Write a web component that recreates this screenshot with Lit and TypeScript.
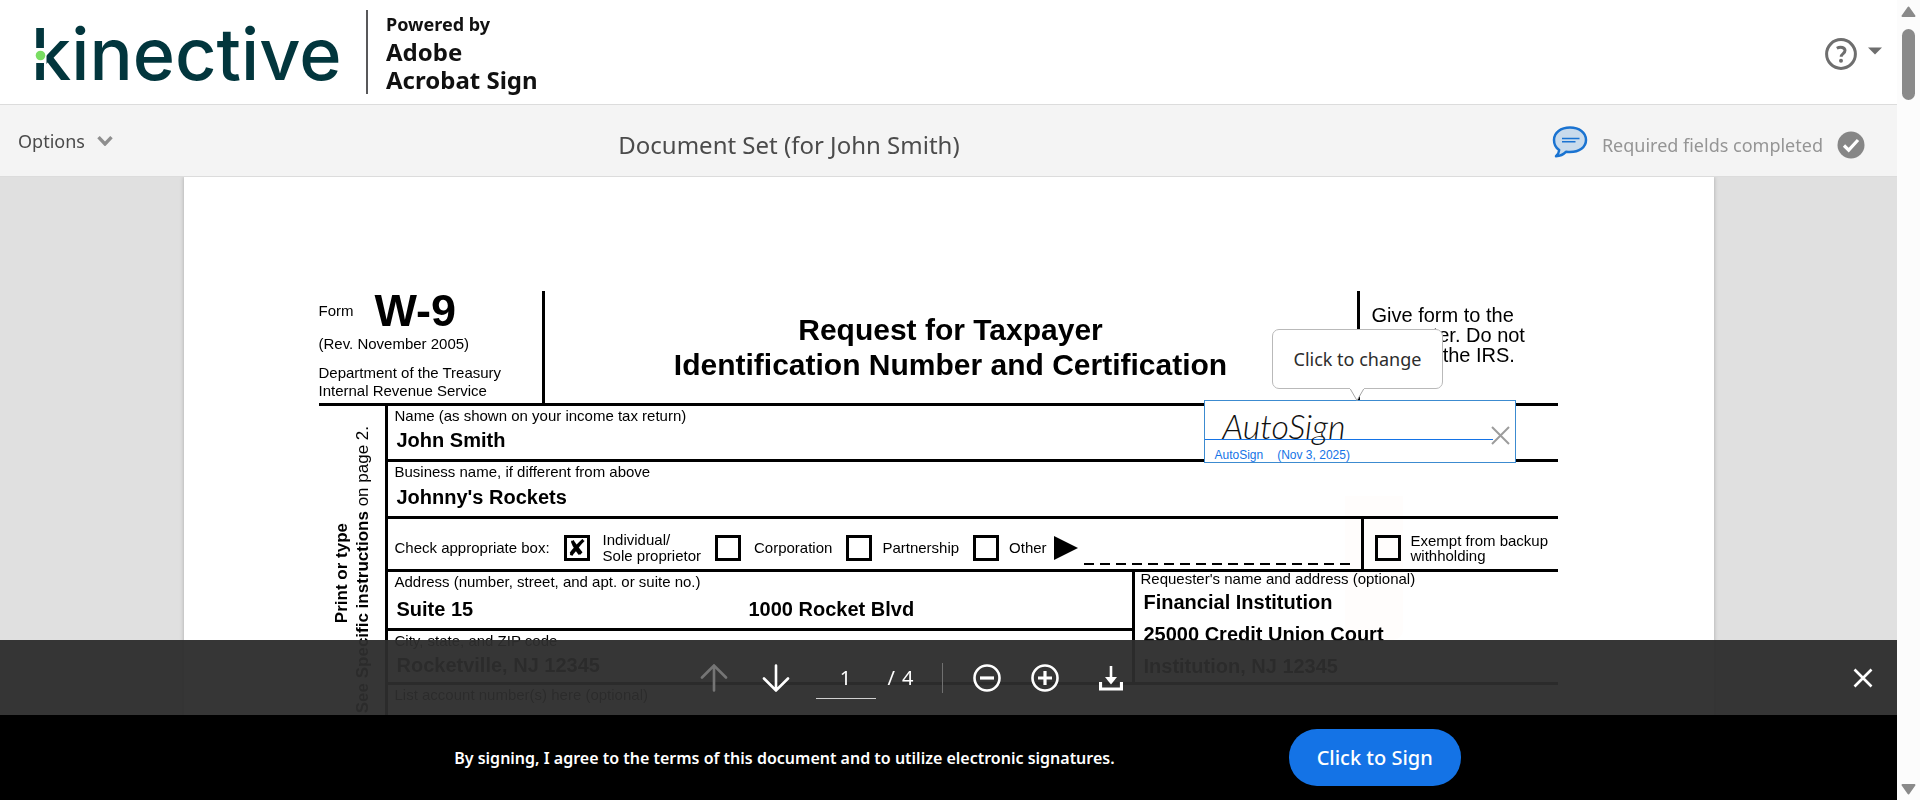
import { LitElement, html, css, svg } from "lit";
import { customElement, state } from "lit/decorators.js";

@customElement("brand-header")
class BrandHeader extends LitElement {
  static styles = css`
    :host {
      display: flex;
      align-items: center;
      height: 104px;
      padding: 0 15px 0 33px;
      border-bottom: 1px solid #dcdcdc;
      background: #fff;
      flex: none;
    }
    .wordmark {
      width: 333px;
      height: 104px;
      overflow: visible;
      flex: none;
    }
    .wordmark text {
      font-family: Inter, sans-serif;
      font-size: 72px;
      font-weight: 500;
      fill: #02363d;
    }
    .powered {
      padding-left: 18px;
      border-left: 2px solid #58585a;
      font-size: 24px;
      line-height: 28px;
      font-weight: 700;
      color: #111;
    }
    .powered small {
      display: block;
      font-size: 18px;
    }
    .powered span {
      display: block;
    }
    .help {
      display: flex;
      align-items: center;
      gap: 11px;
      margin-left: auto;
      padding: 3px 0 0;
      border: 0;
      background: none;
    }
    .help svg {
      display: block;
    }
    .caret {
      margin-bottom: 6px;
    }
  `;

  render() {
    return html`
      <svg class="wordmark" viewBox="0 0 333 104" role="img" aria-label="kinective">
        <text x="-2" y="80">kinective</text>
        <rect x="0" y="48" width="11" height="15" fill="#fff"></rect>
        <rect x="11" y="24" width="2.500" height="57" fill="#fff"></rect>
        <circle cx="7.500" cy="55.500" r="4.800" fill="#79dd62"></circle>
      </svg>
      <div class="powered">
        <small>Powered by</small><span>Adobe</span><span>Acrobat Sign</span>
      </div>
      <button class="help" aria-label="Help">
        <svg width="32" height="32" viewBox="0 0 32 32" fill="none" stroke="#6e6e6e">
          <circle cx="16" cy="16" r="14.400" stroke-width="3"></circle>
          <path d="M11.800 10.200c4-2.200 8.200-.6 8.200 2.400 0 3-3.800 3-3.800 6.200" stroke-width="3"></path>
          <circle cx="16" cy="22.800" r="2" fill="#6e6e6e" stroke="none"></circle>
        </svg>
        <svg class="caret" width="14" height="8" viewBox="0 0 14 8">
          <path d="M0 .5h14L7 7.500z" fill="#6e6e6e"></path>
        </svg>
      </button>
    `;
  }
}

@customElement("document-bar")
class DocumentBar extends LitElement {
  static styles = css`
    :host {
      display: grid;
      grid-template-columns: 32.5% 1fr auto;
      align-items: center;
      height: 71px;
      padding: 0 32px 0 18px;
      border-bottom: 1px solid #dcdcdc;
      background: #f4f4f4;
      flex: none;
    }
    .options {
      display: flex;
      align-items: center;
      gap: 12px;
      justify-self: start;
      padding: 0;
      border: 0;
      background: none;
      font: inherit;
      font-size: 18px;
      color: #4b4b4b;
    }
    h1 {
      margin: 0;
      padding-top: 8px;
      font-size: 24px;
      font-weight: 400;
      color: #4b4b4b;
    }
    .status {
      display: flex;
      align-items: center;
      gap: 14px;
      padding-top: 8px;
      font-size: 18px;
      color: #959595;
    }
    .comment {
      margin-bottom: 6px;
      padding: 0;
      border: 0;
      background: none;
    }
    svg {
      display: block;
    }
  `;

  render() {
    return html`
      <button class="options">
        Options
        <svg width="16" height="10" viewBox="0 0 16 10" fill="none" stroke="#8e8e8e" stroke-width="3.400">
          <path d="M1.500 1.200 8 8l6.500-6.800"></path>
        </svg>
      </button>
      <h1>Document Set (for John Smith)</h1>
      <div class="status">
        <button class="comment" aria-label="Comments">
          <svg width="36" height="32" viewBox="0 0 36 32">
            <path
              d="M18 1.500c9.200 0 16 5.200 16 12.500s-6.800 12-16 12c-1.500 0-2.500-.1-3.800-.3C11.500 28.500 8 30.200 4 30.300c2-1.800 3-4 3.200-6.300C3.500 21.700 2 18 2 14 2 6.700 8.800 1.500 18 1.500z"
              fill="#c9dbec" stroke="#1a73d1" stroke-width="2.500" stroke-linejoin="round"></path>
            <path d="M10 12.500h17.500M10 15.800h13.500" stroke="#1a73d1" stroke-width="1.500"></path>
          </svg>
        </button>
        <span>Required fields completed</span>
        <svg width="28" height="28" viewBox="0 0 28 28">
          <circle cx="14" cy="14" r="13.500" fill="#868686"></circle>
          <path d="M7 14.500 11.700 19.200 21 9" fill="none" stroke="#fff" stroke-width="3.200"></path>
        </svg>
      </div>
    `;
  }
}

@customElement("signature-field")
class SignatureField extends LitElement {
  static styles = css`
    :host {
      position: absolute;
      top: 109px;
      right: 42px;
      width: 312px;
      font-family: "Noto Sans", "Open Sans", sans-serif;
    }
    .box {
      position: relative;
      box-sizing: border-box;
      height: 63px;
      border: 1px solid #3c8bd0;
      background: #fff;
    }
    .sign {
      display: block;
      width: 100%;
      height: 100%;
      padding: 0;
      border: 0;
      background: none;
      text-align: left;
    }
    .script {
      display: block;
      box-sizing: border-box;
      width: 288px;
      height: 39px;
      padding-left: 18px;
      border-bottom: 1px solid #1473e6;
      font-family: Lato, "Open Sans", cursive;
      font-size: 34px;
      font-style: italic;
      font-weight: 300;
      line-height: 50px;
      color: #111;
    }
    .caption {
      display: flex;
      gap: 14px;
      padding: 6px 0 0 10px;
      font-size: 12px;
      line-height: 18px;
      color: #1473e6;
    }
    .clear {
      position: absolute;
      top: 25px;
      right: 5px;
      padding: 0;
      border: 0;
      background: none;
    }
    .clear svg {
      display: block;
    }
    .tip {
      position: absolute;
      left: 68px;
      bottom: 74px;
      box-sizing: border-box;
      padding: 17px 21px 16px;
      border: 1px solid #b9b9b9;
      border-radius: 7px;
      background: #fff;
      font-size: 18px;
      line-height: 25px;
      white-space: nowrap;
      color: #2c2c2c;
    }
    .tip svg {
      position: absolute;
      top: 100%;
      left: 50%;
      margin-left: -7px;
      margin-top: -1px;
    }
  `;

  render() {
    return html`
      <div class="box">
        <button class="sign">
          <span class="script">AutoSign</span>
          <span class="caption"><span>AutoSign</span><span>(Nov 3, 2025)</span></span>
        </button>
        <button class="clear" aria-label="Clear signature">
          <svg width="19" height="19" viewBox="0 0 19 19" stroke="#9c9c9c" stroke-width="2">
            <path d="M1 1l17 17M18 1 1 18"></path>
          </svg>
        </button>
      </div>
      <div class="tip" role="tooltip">
        Click to change
        <svg width="14" height="14" viewBox="0 0 14 14">
          <path d="M0 0h14v2L7 13.500 0 2z" fill="#fff"></path>
          <path d="M.3 2 7 13.500 13.700 2" fill="none" stroke="#a5a5a5"></path>
        </svg>
      </div>
    `;
  }
}

@customElement("tax-form")
class TaxForm extends LitElement {
  static styles = css`
    :host {
      display: block;
      position: relative;
      font-family: "Liberation Sans", Arial, sans-serif;
      font-size: 15px;
      line-height: 18px;
      color: #000;
    }
    .head {
      display: grid;
      grid-template-columns: 223px 1fr 201px;
      height: 112px;
      border-bottom: 3px solid #000;
    }
    .form-id {
      display: flex;
      align-items: center;
      gap: 21px;
      margin-bottom: 4px;
    }
    .form-id b {
      font-size: 45px;
      line-height: 40px;
    }
    .agency {
      margin-top: 11px;
    }
    h2 {
      margin: 0;
      padding-top: 21px;
      border-left: 3px solid #000;
      font-size: 30px;
      line-height: 35px;
      text-align: center;
    }
    .give {
      padding: 14px 12px 0;
      border-left: 3px solid #000;
      font-size: 20px;
      line-height: 20px;
      white-space: nowrap;
    }
    .body {
      display: grid;
      grid-template-columns: 66px 1fr;
    }
    .side {
      display: flex;
      align-items: start;
      justify-content: end;
      gap: 1px;
      padding: 20px 12px 0 0;
    }
    .side p {
      margin: 0;
      writing-mode: vertical-rl;
      transform: rotate(180deg);
      font-size: 17px;
      line-height: 20px;
      white-space: nowrap;
    }
    .side .first {
      margin-top: 97px;
    }
    .rows {
      border-left: 3px solid #000;
    }
    .field {
      display: flex;
      flex-direction: column;
      gap: 4px;
      box-sizing: border-box;
      min-height: 57px;
      padding: 1px 7px;
      border-bottom: 3px solid #000;
    }
    .field.short {
      min-height: 56px;
      gap: 3px;
    }
    .field.address {
      min-height: 59px;
      gap: 6px;
    }
    .field.city {
      min-height: 51px;
      gap: 3px;
    }
    .field.city,
    .field.account {
      border-bottom: 0;
    }
    .field strong {
      padding-left: 2px;
      font-size: 20px;
      line-height: 24px;
    }
    .pair {
      display: grid;
      grid-template-columns: 352px 1fr;
    }
    .choices {
      display: flex;
      box-sizing: border-box;
      min-height: 53px;
      border-bottom: 3px solid #000;
      line-height: 16px;
    }
    .entity {
      display: flex;
      align-items: center;
      flex: 1;
      gap: 14px;
      padding: 8px 9px 0 7px;
      white-space: nowrap;
    }
    .choice {
      display: flex;
      align-items: center;
      gap: 13px;
    }
    .choice.tight {
      gap: 10px;
    }
    .choice input {
      appearance: none;
      display: grid;
      place-items: center;
      width: 26px;
      height: 26px;
      margin: 0;
      border: 3px solid #000;
      flex: none;
    }
    .choice input:checked::before {
      content: "✘";
      font: 700 23px/20px "DejaVu Sans", sans-serif;
    }
    .other {
      display: flex;
      align-items: center;
      flex: 1;
      gap: 6px;
      margin-left: -7px;
    }
    .rule {
      flex: 1;
      height: 2px;
      margin-top: 32px;
      background: repeating-linear-gradient(90deg, #000 0 10px, transparent 10px 16px);
    }
    .exempt {
      width: 197px;
      box-sizing: border-box;
      padding: 8px 0 0 11px;
      border-left: 3px solid #000;
      line-height: 15px;
    }
    .split {
      display: grid;
      grid-template-columns: 744px 1fr;
      border-bottom: 3px solid #000;
    }
    .requester {
      padding-left: 6px;
      border-left: 3px solid #000;
      line-height: 14px;
    }
    .requester strong {
      display: block;
      padding-left: 3px;
      font-size: 20px;
      line-height: 32px;
    }
    .flag {
      position: absolute;
      top: 205px;
      right: 155px;
      width: 58px;
      height: 144px;
      border-radius: 0 0 10px 10px;
      background: #fffdfc;
      mix-blend-mode: multiply;
    }
  `;

  private choice(label: unknown, checked = false, kind = "") {
    return html`<label class="choice ${kind}"><input type="checkbox" .checked=${checked} /><span>${label}</span></label>`;
  }

  private field(label: string, value: string, kind = "") {
    return html`<div class="field ${kind}"><span>${label}</span><strong>${value}</strong></div>`;
  }

  render() {
    return html`
      <div class="head">
        <div>
          <div class="form-id"><span>Form</span><b>W-9</b></div>
          <div>(Rev. November 2005)</div>
          <div class="agency">Department of the Treasury<br />Internal Revenue Service</div>
        </div>
        <h2>Request for Taxpayer<br />Identification Number and Certification</h2>
        <div class="give">Give form to the<br />requester. Do not<br />send to the IRS.</div>
      </div>
      <div class="body">
        <div class="side">
          <p class="first"><b>Print or type</b></p>
          <p><b>See Specific instructions</b> on page 2.</p>
        </div>
        <div class="rows">
          ${this.field("Name (as shown on your income tax return)", "John Smith", "short")}
          ${this.field("Business name, if different from above", "Johnny's Rockets")}
          <div class="choices">
            <div class="entity">
              <span>Check appropriate box:</span>
              ${this.choice(html`Individual/<br />Sole proprietor`, true)}
              ${this.choice("Corporation")}
              ${this.choice("Partnership", false, "tight")}
              ${this.choice("Other", false, "tight")}
              <div class="other">
                <svg width="24" height="24" viewBox="0 0 24 24"><path d="M0 0v24l24-12z"></path></svg>
                <div class="rule"></div>
              </div>
            </div>
            <div class="exempt choice">${this.choice(html`Exempt from backup<br />withholding`, false, "tight")}</div>
          </div>
          <div class="split">
            <div>
              <div class="field address">
                <span>Address (number, street, and apt. or suite no.)</span>
                <div class="pair"><strong>Suite 15</strong><strong>1000 Rocket Blvd</strong></div>
              </div>
              ${this.field("City, state, and ZIP code", "Rocketville, NJ 12345", "city")}
            </div>
            <div class="requester">
              Requester's name and address (optional)
              <strong>Financial Institution</strong>
              <strong>25000 Credit Union Court</strong>
              <strong>Institution, NJ 12345</strong>
            </div>
          </div>
          ${this.field("List account number(s) here (optional)", "", "account")}
        </div>
      </div>
      <div class="flag"></div>
      <signature-field></signature-field>
    `;
  }
}

@customElement("page-controls")
class PageControls extends LitElement {
  static styles = css`
    :host {
      display: flex;
      align-items: center;
      justify-content: center;
      position: relative;
      height: 75px;
      padding-right: 74px;
      background: rgba(45, 45, 45, 0.957);
      color: #fff;
      font-size: 20px;
    }
    button {
      padding: 0;
      border: 0;
      background: none;
      color: #fff;
    }
    button:disabled {
      color: #757575;
    }
    svg {
      display: block;
      fill: none;
      stroke: currentColor;
      stroke-width: 2.600;
    }
    .moves {
      display: flex;
      gap: 34px;
    }
    input {
      box-sizing: border-box;
      width: 60px;
      height: 42px;
      margin: 1px 12px 0 26px;
      padding: 0;
      border: 0;
      border-bottom: 1px solid #d0d0d0;
      background: none;
      color: #fff;
      font: inherit;
      text-align: center;
    }
    .total {
      display: flex;
      gap: 7px;
    }
    .divider {
      width: 1px;
      height: 30px;
      margin: 0 30px 0 29px;
      background: #707070;
    }
    .tools {
      display: flex;
      gap: 30px;
    }
    .save {
      margin-left: 10px;
    }
    .close {
      position: absolute;
      right: 24px;
      top: 28px;
    }
  `;

  @state() private page = 1;

  private go(step: number) {
    this.page = Math.min(4, Math.max(1, this.page + step));
  }

  render() {
    const shaft = svg`<path d="M14 1.500v25M2 14.500 14 26.500l12-12" stroke-linecap="round"></path>`;
    return html`
      <div class="moves">
        <button aria-label="Previous page" ?disabled=${this.page === 1} @click=${() => this.go(-1)}>
          <svg width="28" height="28" viewBox="0 0 28 28"><g transform="rotate(180 14 14)">${shaft}</g></svg>
        </button>
        <button aria-label="Next page" @click=${() => this.go(1)}>
          <svg width="28" height="28" viewBox="0 0 28 28">${shaft}</svg>
        </button>
      </div>
      <input aria-label="Page number" .value=${String(this.page)} />
      <span class="total"><span>/</span><span>4</span></span>
      <span class="divider"></span>
      <div class="tools">
        <button aria-label="Zoom out">
          <svg width="28" height="28" viewBox="0 0 28 28">
            <circle cx="14" cy="14" r="12.500"></circle><path d="M7 14h14" stroke-width="3.200"></path>
          </svg>
        </button>
        <button aria-label="Zoom in">
          <svg width="28" height="28" viewBox="0 0 28 28">
            <circle cx="14" cy="14" r="12.500"></circle><path d="M7 14h14M14 7v14" stroke-width="3.200"></path>
          </svg>
        </button>
        <button class="save" aria-label="Download">
          <svg width="24" height="26" viewBox="0 0 24 26">
            <path d="M1.500 17v7h21v-7" stroke-width="3.200"></path>
            <path d="M12 1v13"></path>
            <path d="M6 12h12l-6 7.500z" fill="currentColor" stroke="none"></path>
          </svg>
        </button>
      </div>
      <button class="close" aria-label="Close">
        <svg width="20" height="20" viewBox="0 0 20 20"><path d="M1.500 1.500l17 17M18.500 1.500l-17 17"></path></svg>
      </button>
    `;
  }
}

@customElement("consent-bar")
class ConsentBar extends LitElement {
  static styles = css`
    :host {
      display: flex;
      align-items: center;
      justify-content: center;
      gap: 174px;
      height: 85px;
      padding-left: 18px;
      background: #000;
      color: #fff;
      font-size: 16px;
      font-weight: 600;
    }
    button {
      height: 57px;
      padding: 0 28px;
      border: 0;
      border-radius: 28px;
      background: #1473e6;
      color: #fff;
      font: inherit;
      font-size: 20px;
      font-weight: 500;
      white-space: nowrap;
    }
  `;

  render() {
    return html`
      <span>By signing, I agree to the terms of this document and to utilize electronic signatures.</span>
      <button>Click to Sign</button>
    `;
  }
}

@customElement("app-root")
class AppRoot extends LitElement {
  static styles = css`
    :host {
      display: grid;
      grid-template-columns: minmax(0, 1fr) 23px;
      height: 100vh;
      overflow: hidden;
      font-family: "Noto Sans", "Open Sans", sans-serif;
    }
    main {
      display: flex;
      flex-direction: column;
      position: relative;
      min-height: 0;
    }
    .canvas {
      flex: 1;
      min-height: 0;
      overflow: hidden;
      background: #e0e0e0;
    }
    .sheet {
      box-sizing: border-box;
      max-width: 1530px;
      min-height: 1980px;
      margin: 0 auto;
      padding: 114px 156px 0 135px;
      background: #fff;
      box-shadow: 0 0 4px rgba(0, 0, 0, 0.25);
    }
    footer {
      position: absolute;
      left: 0;
      right: 0;
      bottom: 0;
    }
    .scroll {
      display: flex;
      flex-direction: column;
      align-items: center;
      padding: 6px 0 5px;
      background: #fcfcfc;
    }
    .scroll svg {
      display: block;
      fill: #8a8a8a;
      stroke: #8a8a8a;
      stroke-width: 2;
      stroke-linejoin: round;
    }
    .thumb {
      width: 13px;
      height: 71px;
      margin: 11px 0 auto;
      border-radius: 7px;
      background: #8a8a8a;
    }
  `;

  render() {
    return html`
      <main>
        <brand-header></brand-header>
        <document-bar></document-bar>
        <div class="canvas"><div class="sheet"><tax-form></tax-form></div></div>
        <footer>
          <page-controls></page-controls>
          <consent-bar></consent-bar>
        </footer>
      </main>
      <div class="scroll" aria-hidden="true">
        <svg width="15" height="12" viewBox="0 0 15 12"><path d="M7.500 1.500 13.500 10h-12z"></path></svg>
        <div class="thumb"></div>
        <svg width="15" height="12" viewBox="0 0 15 12"><path d="M7.500 10.500 13.500 2h-12z"></path></svg>
      </div>
    `;
  }
}
